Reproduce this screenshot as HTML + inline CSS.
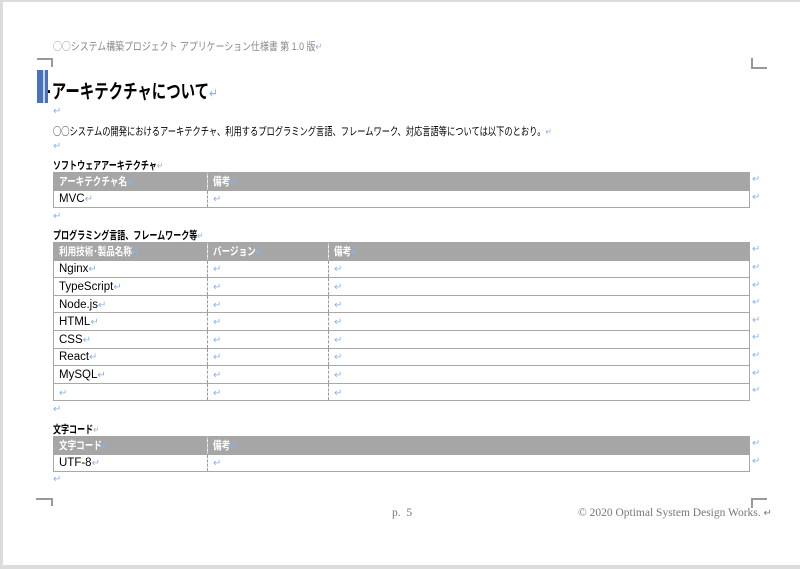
<!DOCTYPE html>
<html><head><meta charset="utf-8"><style>
*{margin:0;padding:0;box-sizing:border-box}
body{width:800px;height:569px;background:#fff;position:relative;overflow:hidden;font-family:"Liberation Sans","Noto Sans CJK JP",sans-serif;color:#000}
.a{position:absolute;white-space:nowrap;transform-origin:0 0}
.o{font-family:"Noto Sans CJK JP",sans-serif}
.r{color:#8ab2e8;font-size:10px}
.t{position:absolute;left:53px;width:697px;border-collapse:collapse;font-size:11.5px;table-layout:fixed}
.t td{height:17.6px;padding:2px 0 0 5px;border:1px solid #a8a8a8;border-left:1px dashed #999;border-right:1px dashed #999;vertical-align:middle;overflow:hidden;white-space:nowrap;line-height:12px}
.t td:first-child{border-left:1px solid #a8a8a8}
.t td:last-child{border-right:1px solid #a8a8a8}
.t tr.h td{background:#a6a6a6;color:#fff;font-weight:bold;font-size:11px;border-top:1px solid #a6a6a6;border-color:#a6a6a6 #d0d0d0}
.t tr.h td:first-child{border-left-color:#a6a6a6}.t tr.h td:last-child{border-right-color:#a6a6a6}
.s{display:inline-block;transform:scaleX(.78);transform-origin:0 50%}
.m{position:absolute;border-color:#999;border-style:solid;border-width:0}
.rr{position:absolute;left:752px;color:#8ab2e8;font-size:10px}
</style></head><body>
<div style="position:absolute;left:0;top:0;width:3px;height:569px;background:#dcdcdc"></div>
<div style="position:absolute;left:0;top:0;width:800px;height:2px;background:#dcdcdc"></div>
<div style="position:absolute;left:0;top:565px;width:800px;height:4px;background:#dcdcdc"></div>

<div class="m" style="left:37px;top:58px;width:16px;height:9px;border-top-width:2px;border-right-width:2px"></div>
<div class="m" style="left:751px;top:58px;width:16px;height:11px;border-left-width:2px;border-bottom-width:2px"></div>
<div class="m" style="left:36px;top:498px;width:17px;height:8px;border-top-width:2px;border-right-width:2px"></div>
<div class="m" style="left:751px;top:498px;width:16px;height:10px;border-top-width:2px;border-left-width:2px"></div>

<div class="a" style="left:53px;top:38px;font-size:11px;color:#888;transform:scaleX(.81)"><span class="o">○○</span>システム構築プロジェクト アプリケーション仕様書 第 1.0 版<span class="r">↵</span></div>

<div style="position:absolute;left:37px;top:70px;width:11px;height:33px;background:#4a70c0"></div>
<div style="position:absolute;left:43px;top:70px;width:2px;height:33px;background:#c8d4f0"></div>
<div class="a" style="left:47px;top:75px;font-size:19.5px;font-weight:bold;transform:scaleX(.74)">·アーキテクチャについて<span class="r" style="font-size:14px;font-weight:normal">↵</span></div>

<div class="a r" style="left:53px;top:106px">↵</div>
<div class="a" style="left:53px;top:123px;font-size:11px;transform:scaleX(.75)"><span class="o">○○</span>システムの開発におけるアーキテクチャ、利用するプログラミング言語、フレームワーク、対応言語等については以下のとおり。<span class="r">↵</span></div>
<div class="a r" style="left:53px;top:141px">↵</div>
<div class="a" style="left:53px;top:157px;font-size:11px;font-weight:bold;transform:scaleX(.73)">ソフトウェアアーキテクチャ<span class="r" style="font-weight:normal">↵</span></div>

<table class="t" style="top:172px"><colgroup><col style="width:154px"><col></colgroup>
<tr class="h"><td><span class="s">アーキテクチャ名<span class="r">↵</span></span></td><td><span class="s">備考<span class="r">↵</span></span></td></tr>
<tr><td>MVC<span class="r">↵</span></td><td><span class="r">↵</span></td></tr></table>
<div class="rr" style="top:174px">↵</div><div class="rr" style="top:192px">↵</div>
<div class="a r" style="left:53px;top:211px">↵</div>

<div class="a" style="left:53px;top:227px;font-size:11px;font-weight:bold;transform:scaleX(.73)">プログラミング言語、フレームワーク等<span class="r" style="font-weight:normal">↵</span></div>
<table class="t" style="top:242px"><colgroup><col style="width:154px"><col style="width:121px"><col></colgroup>
<tr class="h"><td><span class="s">利用技術･製品名称<span class="r">↵</span></span></td><td><span class="s">バージョン<span class="r">↵</span></span></td><td><span class="s">備考<span class="r">↵</span></span></td></tr>
<tr><td>Nginx<span class="r">↵</span></td><td><span class="r">↵</span></td><td><span class="r">↵</span></td></tr>
<tr><td>TypeScript<span class="r">↵</span></td><td><span class="r">↵</span></td><td><span class="r">↵</span></td></tr>
<tr><td>Node.js<span class="r">↵</span></td><td><span class="r">↵</span></td><td><span class="r">↵</span></td></tr>
<tr><td>HTML<span class="r">↵</span></td><td><span class="r">↵</span></td><td><span class="r">↵</span></td></tr>
<tr><td>CSS<span class="r">↵</span></td><td><span class="r">↵</span></td><td><span class="r">↵</span></td></tr>
<tr><td>React<span class="r">↵</span></td><td><span class="r">↵</span></td><td><span class="r">↵</span></td></tr>
<tr><td>MySQL<span class="r">↵</span></td><td><span class="r">↵</span></td><td><span class="r">↵</span></td></tr>
<tr><td><span class="r">↵</span></td><td><span class="r">↵</span></td><td><span class="r">↵</span></td></tr></table>
<div class="rr" style="top:244px">↵</div><div class="rr" style="top:262px">↵</div><div class="rr" style="top:280px">↵</div><div class="rr" style="top:297px">↵</div><div class="rr" style="top:315px">↵</div><div class="rr" style="top:332px">↵</div><div class="rr" style="top:350px">↵</div><div class="rr" style="top:368px">↵</div><div class="rr" style="top:385px">↵</div>
<div class="a r" style="left:53px;top:404px">↵</div>

<div class="a" style="left:53px;top:421px;font-size:11px;font-weight:bold;transform:scaleX(.73)">文字コード<span class="r" style="font-weight:normal">↵</span></div>
<table class="t" style="top:436px"><colgroup><col style="width:154px"><col></colgroup>
<tr class="h"><td><span class="s">文字コード<span class="r">↵</span></span></td><td><span class="s">備考<span class="r">↵</span></span></td></tr>
<tr><td>UTF-8<span class="r">↵</span></td><td><span class="r">↵</span></td></tr></table>
<div class="rr" style="top:438px">↵</div><div class="rr" style="top:456px">↵</div>
<div class="a r" style="left:53px;top:474px">↵</div>

<div class="a" style="left:392px;top:507px;font-family:'Liberation Serif',serif;font-size:11.5px;color:#777">p.&nbsp; 5</div>
<div class="a" style="left:578px;top:507px;font-family:'Liberation Serif',serif;font-size:11.5px;color:#777">© 2020 Optimal System Design Works. <span style="font-size:10px">↵</span></div>
</body></html>
